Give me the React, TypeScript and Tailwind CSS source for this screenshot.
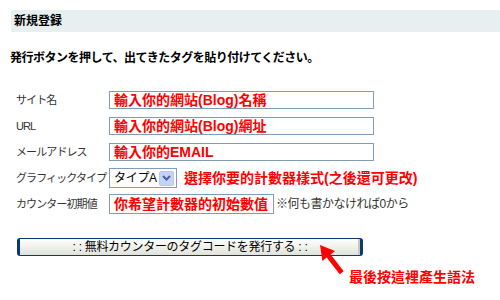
const jp = "font-['Liberation_Sans','Noto_Sans_CJK_JP',sans-serif]";
const tc = "font-['Liberation_Sans','Noto_Sans_CJK_TC',sans-serif]";

type RowProps = {
  label: string;
  children: React.ReactNode;
};

function Row({ label, children }: RowProps) {
  return (
    <div className="flex items-center h-[26px]">
      <div className="w-[109px] shrink-0 pl-[16px] text-[11px] tracking-[-0.9px] text-[#333333] whitespace-nowrap">
        {label}
      </div>
      {children}
    </div>
  );
}

function Box({ text, className }: { text: string; className?: string }) {
  return (
    <div
      className={`shrink-0 h-[18px] border border-[#7f9db9] bg-white flex items-center pl-[4px] text-[14px] leading-none font-bold text-[#ff0000] whitespace-nowrap ${tc} ${className ?? ""}`}
    >
      {text}
    </div>
  );
}

export default function App() {
  return (
    <div className={`relative w-[500px] h-[300px] bg-white overflow-hidden text-black ${jp}`}>
      <div className="mt-[10px] ml-[11px] h-[22px] bg-[#e7eff1] flex items-center pl-[3px] text-[12px] font-bold">
        新規登録
      </div>
      <div className="mt-[20px] ml-[10px] text-[12px] leading-[12px] font-bold tracking-[-0.5px]">
        発行ボタンを押して、出てきたタグを貼り付けてください。
      </div>

      <div className="mt-[23px]">
        <Row label="サイト名">
          <Box text="輸入你的網站(Blog)名稱" className="w-[265px]" />
        </Row>
        <Row label="URL">
          <Box text="輸入你的網站(Blog)網址" className="w-[265px]" />
        </Row>
        <Row label="メールアドレス">
          <Box text="輸入你的EMAIL" className="w-[265px]" />
        </Row>
        <Row label="グラフィックタイプ">
          <div className="shrink-0 w-[68px] h-[20px] border border-[#7f9db9] bg-white flex items-center justify-between pl-[4px] pr-[2px] text-[12px]">
            <span className="tracking-[-0.3px]">タイプA</span>
            <span className="w-[15px] h-[15px] bg-[#c3d3fd] border border-[#b5c8f4] rounded-[2px] flex items-center justify-center">
              <svg width="9" height="6" viewBox="0 0 9 6">
                <path d="M1 1 L4.5 4.5 L8 1" fill="none" stroke="#4d6185" strokeWidth="2" />
              </svg>
            </span>
          </div>
          <span className={`ml-[7px] text-[14px] font-bold text-[#ff0000] whitespace-nowrap ${tc}`}>
            選擇你要的計數器樣式(之後還可更改)
          </span>
        </Row>
        <Row label="カウンター初期値">
          <Box text="你希望計數器的初始數值" className="w-[165px] h-[20px]" />
          <span className="ml-[2px] text-[12px] tracking-[-0.5px] text-[#333333] whitespace-nowrap">
            ※何も書かなければ0から
          </span>
        </Row>
      </div>

      <button className="mt-[21px] ml-[17px] w-[346px] h-[18px] rounded-[3px] border border-[#0a3a6e] border-l-[3px] border-r-[3px] bg-gradient-to-b from-[#ffffff] to-[#e2e1d9] shadow-[inset_-2px_0_0_#c9c8c0] text-[12px] leading-none tracking-[-0.3px] flex items-center justify-center whitespace-pre">
        {": : 無料カウンターのタグコードを発行する : :"}
      </button>

      <div className="absolute left-[316px] top-[242px]">
        <svg width="32" height="35" viewBox="0 0 32 35">
          <polygon
            points="4,3 19,9 14.7,12.5 27.7,29.2 23.7,32.2 10.7,15.5 6.4,19"
            fill="#ff0000"
          />
        </svg>
      </div>
      <div className={`absolute left-[349px] top-[269px] text-[14px] leading-[16px] font-bold text-[#ff0000] ${tc}`}>
        最後按這裡產生語法
      </div>
    </div>
  );
}
